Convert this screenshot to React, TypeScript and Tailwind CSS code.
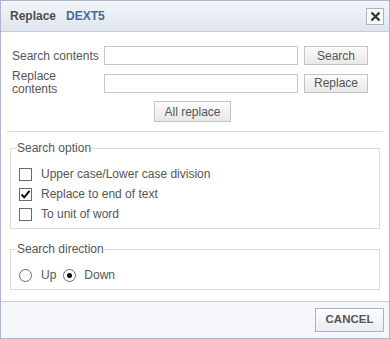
import React, { useState } from "react";

function Check({ checked }: { checked: boolean }) {
  return (
    <span className="w-[13px] h-[13px] border border-[#6b6b6b] bg-white flex items-center justify-center shrink-0">
      {checked && (
        <svg width="11" height="11" viewBox="0 0 11 11">
          <path d="M1.5 5.5 L4.2 8.3 L9.6 1.8" fill="none" stroke="#111" strokeWidth="2" />
        </svg>
      )}
    </span>
  );
}

function Radio({ checked }: { checked: boolean }) {
  return (
    <span className="w-[13px] h-[13px] rounded-full border border-[#6b6b6b] bg-white flex items-center justify-center shrink-0">
      {checked && <span className="w-[5px] h-[5px] rounded-full bg-[#111]" />}
    </span>
  );
}

const btn =
  "h-[19px] border border-[#c4c4c4] bg-linear-to-b from-[#fbfbfb] to-[#e8e8e8] text-[#555] text-[12px] leading-none flex items-center justify-center";

export default function App() {
  const [opts] = useState([
    { label: "Upper case/Lower case division", checked: false },
    { label: "Replace to end of text", checked: true },
    { label: "To unit of word", checked: false },
  ]);

  return (
    <div
      className="w-[390px] h-[339px] border border-[#aeb7ca] bg-white flex flex-col text-[#555] text-[12px]"
      style={{ fontFamily: '"Liberation Sans", Arial, sans-serif' }}
    >
      {/* Header */}
      <div className="h-[31px] shrink-0 border-b border-[#c5ccdb] bg-linear-to-b from-[#f3f5fa] to-[#dfe4ee] flex items-center pl-[9px] pr-[5px]">
        <span className="font-bold text-[12px] text-[#4d4d4d]">Replace</span>
        <span className="font-bold text-[12px] text-[#4b6a98] ml-[10px]">DEXT5</span>
        <button className="ml-auto w-[18px] h-[17px] border border-[#b3b3b3] bg-[#f7f8fa] flex items-center justify-center">
          <svg width="11" height="11" viewBox="0 0 11 11">
            <path d="M1.5 1.5 L9.5 9.5 M9.5 1.5 L1.5 9.5" stroke="#333" strokeWidth="2.2" />
          </svg>
        </button>
      </div>

      {/* Body */}
      <div className="flex-1 flex flex-col pt-[14px]">
        <div className="flex items-center pl-[11px]">
          <span className="w-[92px]">Search contents</span>
          <input className="w-[194px] h-[19px] border border-[#c8c8c8] outline-none" />
          <button className={btn + " w-[64px] ml-[6px]"}>Search</button>
        </div>
        <div className="flex items-center pl-[11px] mt-[5px]">
          <span className="w-[92px] leading-[13px]">
            Replace
            <br />
            contents
          </span>
          <input className="w-[194px] h-[19px] border border-[#c8c8c8] outline-none" />
          <button className={btn + " w-[64px] ml-[6px]"}>Replace</button>
        </div>
        <div className="flex pl-[153px] mt-[5px]">
          <button className={btn + " w-[77px] h-[21px]"}>All replace</button>
        </div>

        <div className="mx-[6px] mt-[9px] h-px bg-[#dcdcdc]" />

        <fieldset className="mx-[9px] mt-[9px] border border-[#dcdcdc] px-[6px] pb-[4px]">
          <legend className="leading-[14px]">Search option</legend>
          <div className="pt-[9px] pl-[2px]">
            {opts.map((o) => (
              <label key={o.label} className="h-[20px] flex items-center">
                <Check checked={o.checked} />
                <span className="ml-[9px]">{o.label}</span>
              </label>
            ))}
          </div>
        </fieldset>

        <fieldset className="mx-[9px] mt-[13px] border border-[#dcdcdc] px-[6px] pb-[4px]">
          <legend className="leading-[14px]">Search direction</legend>
          <div className="pt-[9px] pl-[2px] h-[29px] flex items-center">
            <Radio checked={false} />
            <span className="ml-[9px]">Up</span>
            <span className="ml-[7px]">
              <Radio checked={true} />
            </span>
            <span className="ml-[8px]">Down</span>
          </div>
        </fieldset>
      </div>

      {/* Footer */}
      <div className="h-[37px] shrink-0 border-t border-[#c5ccdb] bg-[#f5f6fa] flex items-center justify-end pr-[5px]">
        <button className="w-[69px] h-[24px] border border-[#aab2c4] bg-linear-to-b from-[#ffffff] to-[#e9ecf3] text-[#555] font-bold text-[11.5px] flex items-center justify-center">
          CANCEL
        </button>
      </div>
    </div>
  );
}
